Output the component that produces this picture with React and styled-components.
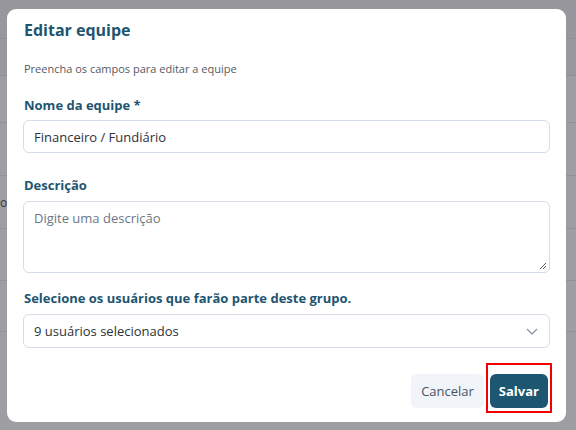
import React from 'react';
import styled, { createGlobalStyle } from 'styled-components';

const GlobalStyle = createGlobalStyle`
  html, body {
    margin: 0;
    padding: 0;
    width: 576px;
    height: 430px;
    overflow: hidden;
    font-family: "Open Sans", "Liberation Sans", sans-serif;
  }
`;

const Page = styled.div`
  width: 576px;
  height: 430px;
  background: #ffffff;
`;

const TopBand = styled.div`
  height: 38px;
  background: #f2f2f6;
  border-bottom: 1px solid #e4e4ea;
`;

const HeadRow = styled.div`
  height: 36px;
  background: #f4f4f8;
  border-bottom: 1px solid #e0e0e6;
`;

const Row = styled.div`
  height: ${p => p.h}px;
  border-bottom: 1px solid #e6e6ec;
  display: flex;
  align-items: center;
  font-size: 12px;
  color: #445;
`;

const Backdrop = styled.div`
  position: fixed;
  inset: 0;
  background: rgba(40, 40, 48, 0.45);
  display: flex;
  align-items: flex-start;
  padding: 9px 0 0 7px;
`;

const Modal = styled.div`
  width: 559px;
  height: 413px;
  box-sizing: border-box;
  background: #fff;
  border-radius: 9px;
  padding: 10px 16px 16px 16px;
  display: flex;
  flex-direction: column;

  & > * {
    flex-shrink: 0;
  }
`;

const Title = styled.h2`
  margin: 0 0 0 1px;
  font-size: 16px;
  font-weight: 700;
  color: #1e5570;
  line-height: 22px;
`;

const Subtitle = styled.p`
  margin: 20px 0 0 1px;
  font-size: 11px;
  color: #555b62;
  line-height: 16px;
`;

const Label = styled.label`
  display: block;
  margin: ${p => p.mt}px 0 0 1px;
  font-size: 13px;
  font-weight: 700;
  color: #1e5570;
  line-height: 18px;
`;

const Field = styled.div`
  margin-top: ${p => p.mt}px;
  height: ${p => p.h}px;
  box-sizing: border-box;
  border: 1px solid #d5dde8;
  border-radius: 6px;
  padding: 0 10px;
  display: flex;
  align-items: ${p => (p.$top ? 'flex-start' : 'center')};
  padding-top: ${p => (p.$top ? 7 : 0)}px;
  font-size: 13px;
  color: ${p => (p.$muted ? '#6b7785' : '#2d3238')};
  position: relative;
`;

const FieldText = styled.span`
  flex: 1;
`;

const Grip = styled.svg`
  position: absolute;
  right: 2px;
  bottom: 2px;
`;

const Footer = styled.div`
  margin-top: 15px;
  margin-right: -2px;
  display: flex;
  justify-content: flex-end;
  align-items: flex-start;
  gap: 2px;
`;

const Button = styled.button`
  height: 34px;
  border: none;
  border-radius: 6px;
  padding: 0 ${p => p.px}px;
  font-family: inherit;
  font-size: 13px;
  font-weight: ${p => (p.$primary ? 700 : 500)};
  background: ${p => (p.$primary ? '#1c5670' : '#f1f4f8')};
  color: ${p => (p.$primary ? '#ffffff' : '#4a5360')};
  margin-top: ${p => p.mt || 0}px;
`;

const Highlight = styled.div`
  border: 2px solid #f00000;
  padding: 9px 2px 3px 2px;
  display: flex;
`;

function App() {
  return (
    <>
      <GlobalStyle />
      <Page>
        <TopBand />
        <HeadRow />
        <Row h={46} />
        <Row h={52} />
        <Row h={52}>or</Row>
        <Row h={51} />
        <Row h={50} />
      </Page>
      <Backdrop>
        <Modal>
          <Title>Editar equipe</Title>
          <Subtitle>Preencha os campos para editar a equipe</Subtitle>
          <Label mt={19}>Nome da equipe *</Label>
          <Field mt={6} h={33}>
            <FieldText>Financeiro / Fundiário</FieldText>
          </Field>
          <Label mt={23}>Descrição</Label>
          <Field mt={7} h={72} $top $muted>
            <FieldText>Digite uma descrição</FieldText>
            <Grip width="8" height="8" viewBox="0 0 8 8">
              <path d="M7 1L1 7M7 4L4 7" stroke="#555" strokeWidth="1" />
            </Grip>
          </Field>
          <Label mt={16}>Selecione os usuários que farão parte deste grupo.</Label>
          <Field mt={7} h={34}>
            <FieldText>9 usuários selecionados</FieldText>
            <svg width="14" height="14" viewBox="0 0 14 14">
              <path d="M2 5l5 5 5-5" fill="none" stroke="#8a94a3" strokeWidth="1.3" />
            </svg>
          </Field>
          <Footer>
            <Button px={10} mt={11}>Cancelar</Button>
            <Highlight>
              <Button $primary px={9}>Salvar</Button>
            </Highlight>
          </Footer>
        </Modal>
      </Backdrop>
    </>
  );
}

export default App;
